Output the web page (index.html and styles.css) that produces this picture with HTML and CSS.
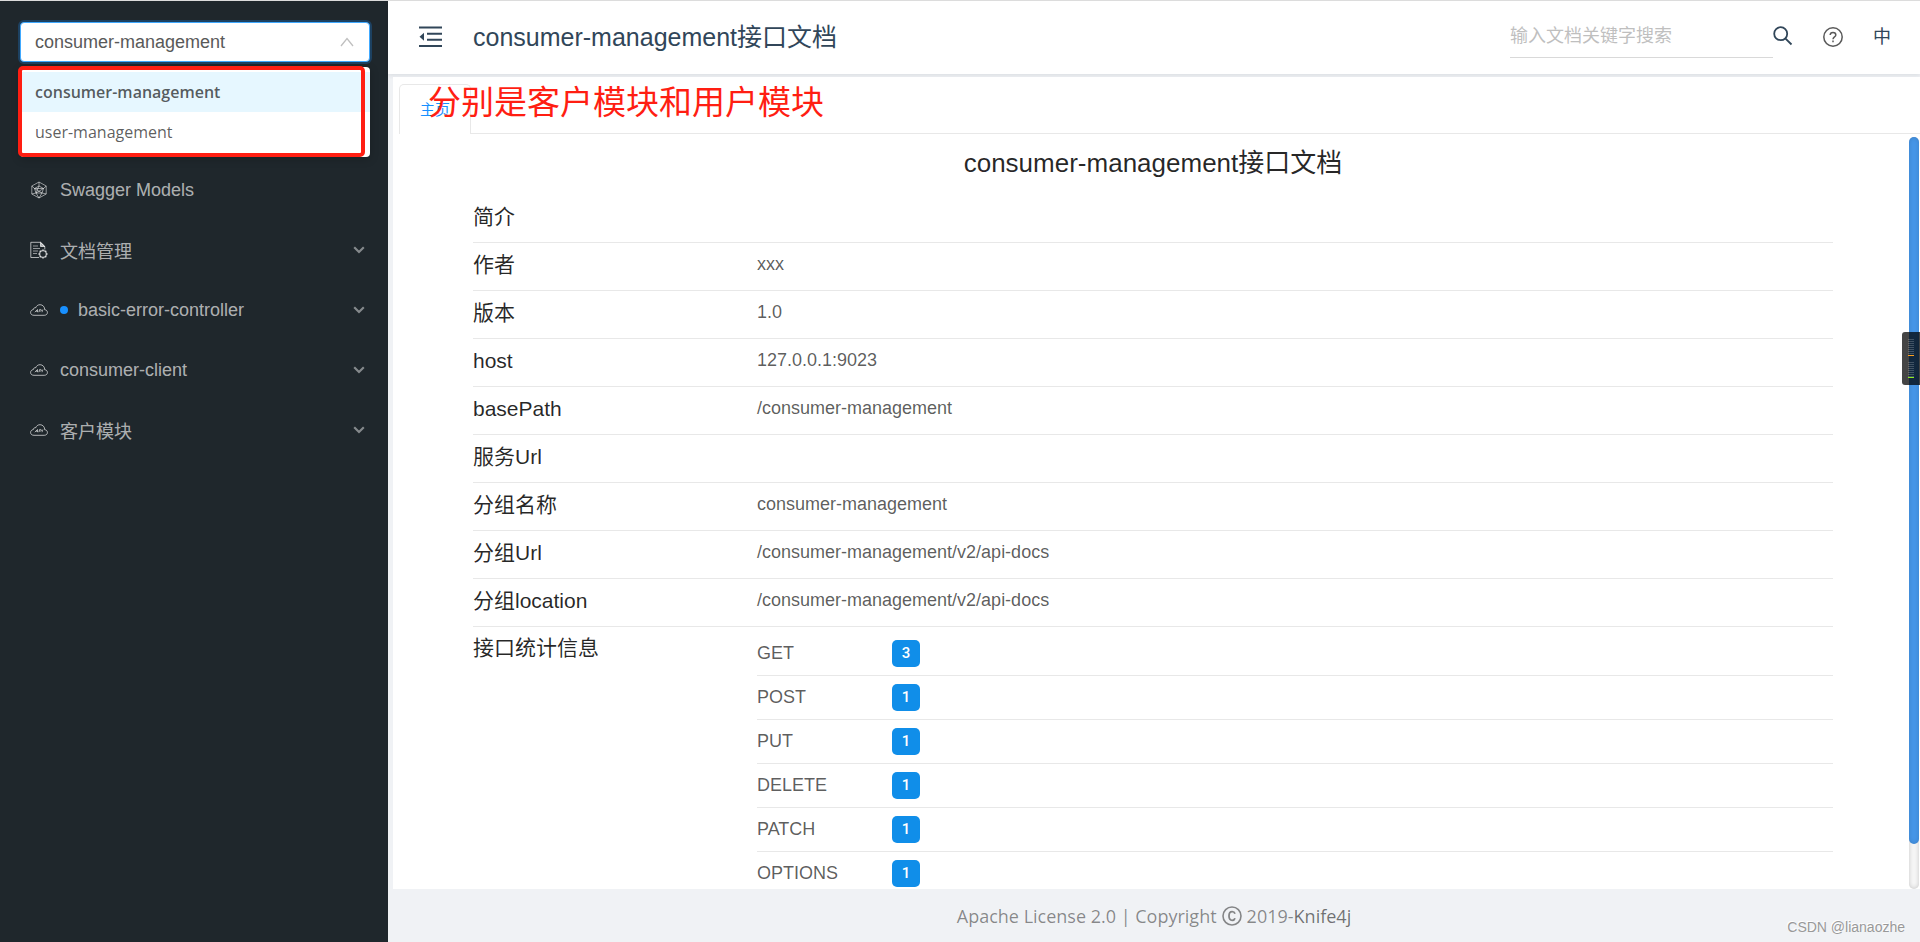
FILE: index.html
```html
<!DOCTYPE html>
<html lang="zh">
<head>
  <meta charset="UTF-8">
  <meta name="viewport" content="width=device-width, initial-scale=1.0">
  <title>consumer-management接口文档</title>
  <link rel="stylesheet" href="styles.css">
</head>
<body>

  <!-- icons used more than once -->
  <svg class="sprite" aria-hidden="true">
    <symbol id="icon-api" viewBox="0 0 18 12">
      <path d="M4 11.3h10.2c2 0 3.2-1.2 3.2-2.8 0-1.600-1.200-2.700-2.700-2.800.1-2.700-1.900-5-4.600-5C7.800.7 6.300 2 5.800 3.700 4.700 3.300 3.400 4.200 3.300 5.600 1.700 5.800.6 6.900.6 8.500c0 1.700 1.300 2.800 3.400 2.800z" fill="none" stroke="currentColor"/>
      <path d="M4.800 8.200l2.700-2.700v2.700M5.800 7.200h1.700M8.800 8.200l.8-2.700h1.200c1 .1.800 1.500-.2 1.500H9.300M12 8.200l.9-2.700" fill="none" stroke="currentColor" stroke-width=".9"/>
    </symbol>
    <symbol id="icon-down" viewBox="0 0 12 8">
      <path d="M1.200 1.300L6 6l4.800-4.700" fill="none" stroke="currentColor" stroke-width="2.200"/>
    </symbol>
  </svg>

  <aside class="sidebar">
    <div class="group">
      <select class="group-select" aria-label="分组">
        <option>consumer-management</option>
        <option>user-management</option>
      </select>
      <svg class="group-arrow" viewBox="0 0 14 10"><path d="M1 9l6-7.500L13 9" fill="none" stroke="#bfbfbf" stroke-width="1.300"/></svg>
      <div class="dropdown">
        <button class="option selected">consumer-management</button>
        <button class="option">user-management</button>
        <div class="mark-box"></div>
      </div>
    </div>

    <nav class="menu">
      <a href="#models" class="menu-item">
        <svg class="menu-icon" viewBox="0 0 18 18" fill="none" stroke="currentColor" stroke-width=".8"><path d="M9 1l7.200 4v8L9 17l-7.200-4V5zM9 1v4l4.500 2.500L16.200 5M13.500 7.500L12 12l4.200 1M12 12l-3 5-3-5 3-7-4.500 2.500L1.800 5M4.500 7.500L6 12l-4.200 1M6 12h6M4.500 7.500L12 12M13.500 7.500L6 12M4.500 7.500h9"/></svg>
        <span>Swagger Models</span>
      </a>
      <a href="#docs" class="menu-item">
        <svg class="menu-icon" viewBox="0 0 18 18" fill="none" stroke="currentColor"><path d="M9 16.500H.8V1.300h9.700l4.300 4.200v3"/><path d="M10.500 1.300v4.200h4.300z" fill="currentColor"/><path d="M3 5h5M3 7.500h7M3 10h5M3 12.500h4" stroke-width=".8"/><circle cx="13" cy="13" r="3.300" stroke-width="1.300"/><path d="M13 8.300v1.500M13 16.200v1.500M8.300 13h1.500M16.200 13h1.500M9.700 9.700l1 1M15.300 15.300l1 1M9.700 16.300l1-1M15.300 10.700l1-1" stroke-width="1.300"/></svg>
        <span>文档管理</span>
        <svg class="menu-arrow"><use href="#icon-down"/></svg>
      </a>
      <a href="#basic-error" class="menu-item">
        <svg class="menu-icon cloud"><use href="#icon-api"/></svg>
        <i class="dot"></i>
        <span>basic-error-controller</span>
        <svg class="menu-arrow"><use href="#icon-down"/></svg>
      </a>
      <a href="#client" class="menu-item">
        <svg class="menu-icon cloud"><use href="#icon-api"/></svg>
        <span>consumer-client</span>
        <svg class="menu-arrow"><use href="#icon-down"/></svg>
      </a>
      <a href="#customer" class="menu-item">
        <svg class="menu-icon cloud"><use href="#icon-api"/></svg>
        <span>客户模块</span>
        <svg class="menu-arrow"><use href="#icon-down"/></svg>
      </a>
    </nav>
  </aside>

  <div class="layout">
    <header class="header">
      <button class="fold" aria-label="收起菜单">
        <svg viewBox="0 0 24 22"><path d="M0 1.500h23M8 7.800h15M8 13.800h15M0 20h23" stroke="currentColor" stroke-width="2"/><path d="M5 6.800v8L.5 10.800z" fill="currentColor"/></svg>
      </button>
      <h1 class="header-title">consumer-management接口文档</h1>
      <div class="header-right">
        <input class="search" type="text" placeholder="输入文档关键字搜索" aria-label="搜索">
        <button class="search-btn" aria-label="搜索">
          <svg viewBox="0 0 20 20" fill="none" stroke="currentColor" stroke-width="1.800"><circle cx="7.700" cy="7.700" r="6.500"/><path d="M12.300 12.300l6.200 6.200"/></svg>
        </button>
        <button class="help-btn" aria-label="帮助">
          <svg viewBox="0 0 20 20" fill="none" stroke="currentColor" stroke-width="1.500"><circle cx="10" cy="10" r="9.200"/><path d="M7.200 8c0-1.600 1.200-2.600 2.800-2.600s2.800 1 2.800 2.500c0 2-2.800 2-2.800 4.300"/><path d="M10 13.600v1.700"/></svg>
        </button>
        <button class="lang-btn">中</button>
      </div>
    </header>

    <main class="content">
      <div class="tabs">
        <button class="tab">主页</button>
        <span class="tabs-line"></span>
        <span class="mark-text">分别是客户模块和用户模块</span>
      </div>

      <div class="pane">
        <h2 class="doc-title">consumer-management接口文档</h2>
        <table class="info">
          <tr><th scope="row">简介</th><td></td></tr>
          <tr><th scope="row">作者</th><td>xxx</td></tr>
          <tr><th scope="row">版本</th><td>1.0</td></tr>
          <tr><th scope="row">host</th><td>127.0.0.1:9023</td></tr>
          <tr><th scope="row">basePath</th><td>/consumer-management</td></tr>
          <tr><th scope="row">服务Url</th><td></td></tr>
          <tr><th scope="row">分组名称</th><td>consumer-management</td></tr>
          <tr><th scope="row">分组Url</th><td>/consumer-management/v2/api-docs</td></tr>
          <tr><th scope="row">分组location</th><td>/consumer-management/v2/api-docs</td></tr>
          <tr class="stats-row">
            <th scope="row">接口统计信息</th>
            <td>
              <ul class="stats">
                <li><span class="method">GET</span><span class="count">3</span></li>
                <li><span class="method">POST</span><span class="count">1</span></li>
                <li><span class="method">PUT</span><span class="count">1</span></li>
                <li><span class="method">DELETE</span><span class="count">1</span></li>
                <li><span class="method">PATCH</span><span class="count">1</span></li>
                <li><span class="method">OPTIONS</span><span class="count">1</span></li>
              </ul>
            </td>
          </tr>
        </table>
        <div class="scrollbar"><div class="thumb"></div></div>
      </div>
    </main>

    <footer class="footer">
      <span>Apache License 2.0 | Copyright</span>
      <svg class="copy" viewBox="0 0 20 20" fill="none" stroke="currentColor" stroke-width="1.600"><circle cx="10" cy="10" r="9"/><path d="M13 7.800C12.600 6.500 11.600 5.700 10.200 5.700 8.200 5.700 7 7.200 7 10s1.200 4.300 3.200 4.300c1.400 0 2.400-.8 2.800-2.100" stroke-width="1.800"/></svg>
      <span>2019-<a href="#knife4j">Knife4j</a></span>
    </footer>
  </div>

  <!-- level meter on the right edge -->
  <div class="meter">
    <div class="bars orange"></div>
    <div class="bars green"></div>
  </div>
  <span class="watermark">CSDN @lianaozhe</span>

</body>
</html>
```
FILE: styles.css
```css
* {
  margin: 0;
  padding: 0;
  box-sizing: border-box;
}

body {
  display: flex;
  height: 100vh;
  overflow: hidden;
  border-top: 1px solid #dcdcdc;
  background: #f0f2f5;
  color: rgba(0, 0, 0, 0.65);
  font-family: "Liberation Sans", "Noto Sans CJK SC", sans-serif;
  font-size: 18px;
}

button,
input,
select {
  font: inherit;
  color: inherit;
  background: none;
  border: none;
  outline: none;
}

button {
  cursor: pointer;
}

a {
  color: inherit;
  text-decoration: none;
}

svg {
  display: block;
  flex: none;
}

.sprite {
  position: absolute;
  width: 0;
  height: 0;
}

/* sidebar */
.sidebar {
  flex: none;
  width: 388px;
  background: #1f272c;
}

.group {
  position: relative;
  padding: 21px 18px 0 20px;
}

.group-select {
  display: block;
  width: 100%;
  height: 40px;
  padding: 0 14px 1px;
  appearance: none;
  background: #fff;
  border: 1px solid #40a9ff;
  border-radius: 4px;
  box-shadow: 0 0 0 2px rgba(24, 144, 255, 0.25);
  color: #595959;
}

.group-arrow {
  position: absolute;
  top: 36px;
  right: 34px;
  width: 14px;
  height: 10px;
}

.dropdown {
  position: absolute;
  top: 66px;
  left: 20px;
  right: 18px;
  padding: 5px 0;
  background: #fff;
  border-radius: 4px;
  box-shadow: 0 2px 10px rgba(0, 0, 0, 0.2);
}

.option {
  display: block;
  width: 100%;
  height: 40px;
  padding: 0 15px;
  text-align: left;
  font-family: "Open Sans", sans-serif;
  font-size: 16px;
}

.option.selected {
  background: #e6f7ff;
  font-weight: 600;
}

.mark-box {
  position: absolute;
  inset: -1px 5px 0 -2px;
  border: 4px solid #ff1e12;
  border-radius: 5px;
  pointer-events: none;
}

.menu {
  padding-top: 98px;
}

.menu-item {
  display: flex;
  align-items: center;
  height: 60px;
  padding: 0 23px 0 30px;
  color: rgba(255, 255, 255, 0.65);
}

.menu-icon {
  width: 18px;
  height: 18px;
  margin-right: 12px;
}

.menu-icon.cloud {
  height: 12px;
}

.dot {
  width: 8px;
  height: 8px;
  margin-right: 10px;
  border-radius: 50%;
  background: #1890ff;
}

.menu-arrow {
  width: 12px;
  height: 8px;
  margin-left: auto;
  opacity: 0.7;
}

/* header */
.layout {
  flex: 1;
  display: flex;
  flex-direction: column;
  min-width: 0;
}

.header {
  display: flex;
  align-items: center;
  height: 73px;
  padding: 0 29px 2px 31px;
  background: #fff;
  box-shadow: 0 2px 4px rgba(0, 21, 41, 0.08);
  color: #314659;
}

.fold svg {
  width: 24px;
  height: 22px;
}

.header-title {
  margin-left: 30px;
  padding-bottom: 4px;
  font-size: 25px;
  font-weight: 400;
}

.header-right {
  display: flex;
  align-items: center;
  margin-left: auto;
}

.search {
  width: 263px;
  height: 42px;
  border-bottom: 1px solid #d9d9d9;
}

.search::placeholder {
  color: #bfbfbf;
}

.search-btn svg,
.help-btn svg {
  width: 20px;
  height: 20px;
}

.search-btn {
  padding-bottom: 2px;
}

.help-btn {
  margin: 0 30px;
  color: #595959;
}

.lang-btn {
  padding-bottom: 3px;
}

/* content */
.content {
  flex: 1;
  display: flex;
  flex-direction: column;
  min-height: 0;
  margin: 3px 0 0 5px;
  background: #fff;
}

.tabs {
  position: relative;
  display: flex;
  padding: 7px 0 0 6px;
}

.tab {
  width: 72px;
  height: 50px;
  padding-bottom: 2px;
  border: 1px solid #e8e8e8;
  border-bottom: none;
  border-radius: 5px 5px 0 0;
  color: #1890ff;
  font-size: 15px;
}

.tabs-line {
  flex: 1;
  border-bottom: 1px solid #e8e8e8;
}

.mark-text {
  position: absolute;
  top: 2px;
  left: 35px;
  color: #ff1e12;
  font-size: 33px;
  line-height: 48px;
}

.pane {
  position: relative;
  flex: 1;
  min-height: 0;
  overflow: hidden;
  padding: 9px 87px 0 80px;
}

.doc-title {
  color: rgba(0, 0, 0, 0.85);
  font-size: 26px;
  font-weight: 400;
  line-height: 40px;
  text-align: center;
}

.info {
  width: 100%;
  margin-top: 11px;
  border-collapse: collapse;
  table-layout: fixed;
}

.info th,
.info td {
  height: 48px;
  padding-bottom: 4px;
  border-bottom: 1px solid #e8e8e8;
  text-align: left;
  line-height: 24px;
}

.info th {
  width: 284px;
  padding-bottom: 2px;
  color: rgba(0, 0, 0, 0.85);
  font-size: 21px;
  font-weight: 400;
}

.info .stats-row th {
  padding-top: 9px;
  vertical-align: top;
}

.info .stats-row td {
  padding: 5px 0 0;
}

.stats {
  list-style: none;
}

.stats li {
  display: flex;
  align-items: center;
  height: 44px;
  border-bottom: 1px solid #e8e8e8;
}

.method {
  width: 135px;
}

.count {
  width: 28px;
  height: 27px;
  border-radius: 5px;
  background: #108ee9;
  color: #fff;
  font-family: Roboto, sans-serif;
  font-size: 15px;
  font-weight: 500;
  line-height: 27px;
  text-align: center;
}

.scrollbar {
  position: absolute;
  top: 3px;
  right: 1px;
  bottom: 0;
  width: 10px;
  border-radius: 5px;
  background: #f7f7f7;
  box-shadow: inset 0 0 5px rgba(0, 0, 0, 0.2);
}

.thumb {
  height: 94%;
  border-radius: 5px;
  background: #4696e8;
  box-shadow: inset 0 0 5px rgba(0, 0, 0, 0.15);
}

.footer {
  display: flex;
  align-items: center;
  justify-content: center;
  gap: 5px;
  height: 53px;
  color: rgba(0, 0, 0, 0.45);
  font-family: "Open Sans", sans-serif;
  font-size: 18px;
}

.footer a {
  color: rgba(0, 0, 0, 0.55);
}

.copy {
  width: 20px;
  height: 20px;
}

.meter {
  position: absolute;
  top: 332px;
  right: 0;
  display: flex;
  flex-direction: column;
  gap: 6px;
  width: 18px;
  height: 53px;
  padding: 7px 6px;
  border-radius: 3px 0 0 3px;
  background: rgba(0, 0, 0, 0.73);
}

.bars {
  height: 17px;
  border-bottom: 1px solid;
  background: repeating-linear-gradient(rgba(255, 255, 255, 0.2) 0 1px, transparent 1px 2px);
}

.orange {
  border-color: #ffa01e;
}

.green {
  border-color: #8cf01e;
}

.watermark {
  position: absolute;
  right: 15px;
  bottom: 7px;
  color: #999;
  font-size: 14px;
  text-shadow: -1px -1px 0 #fff;
}
```
